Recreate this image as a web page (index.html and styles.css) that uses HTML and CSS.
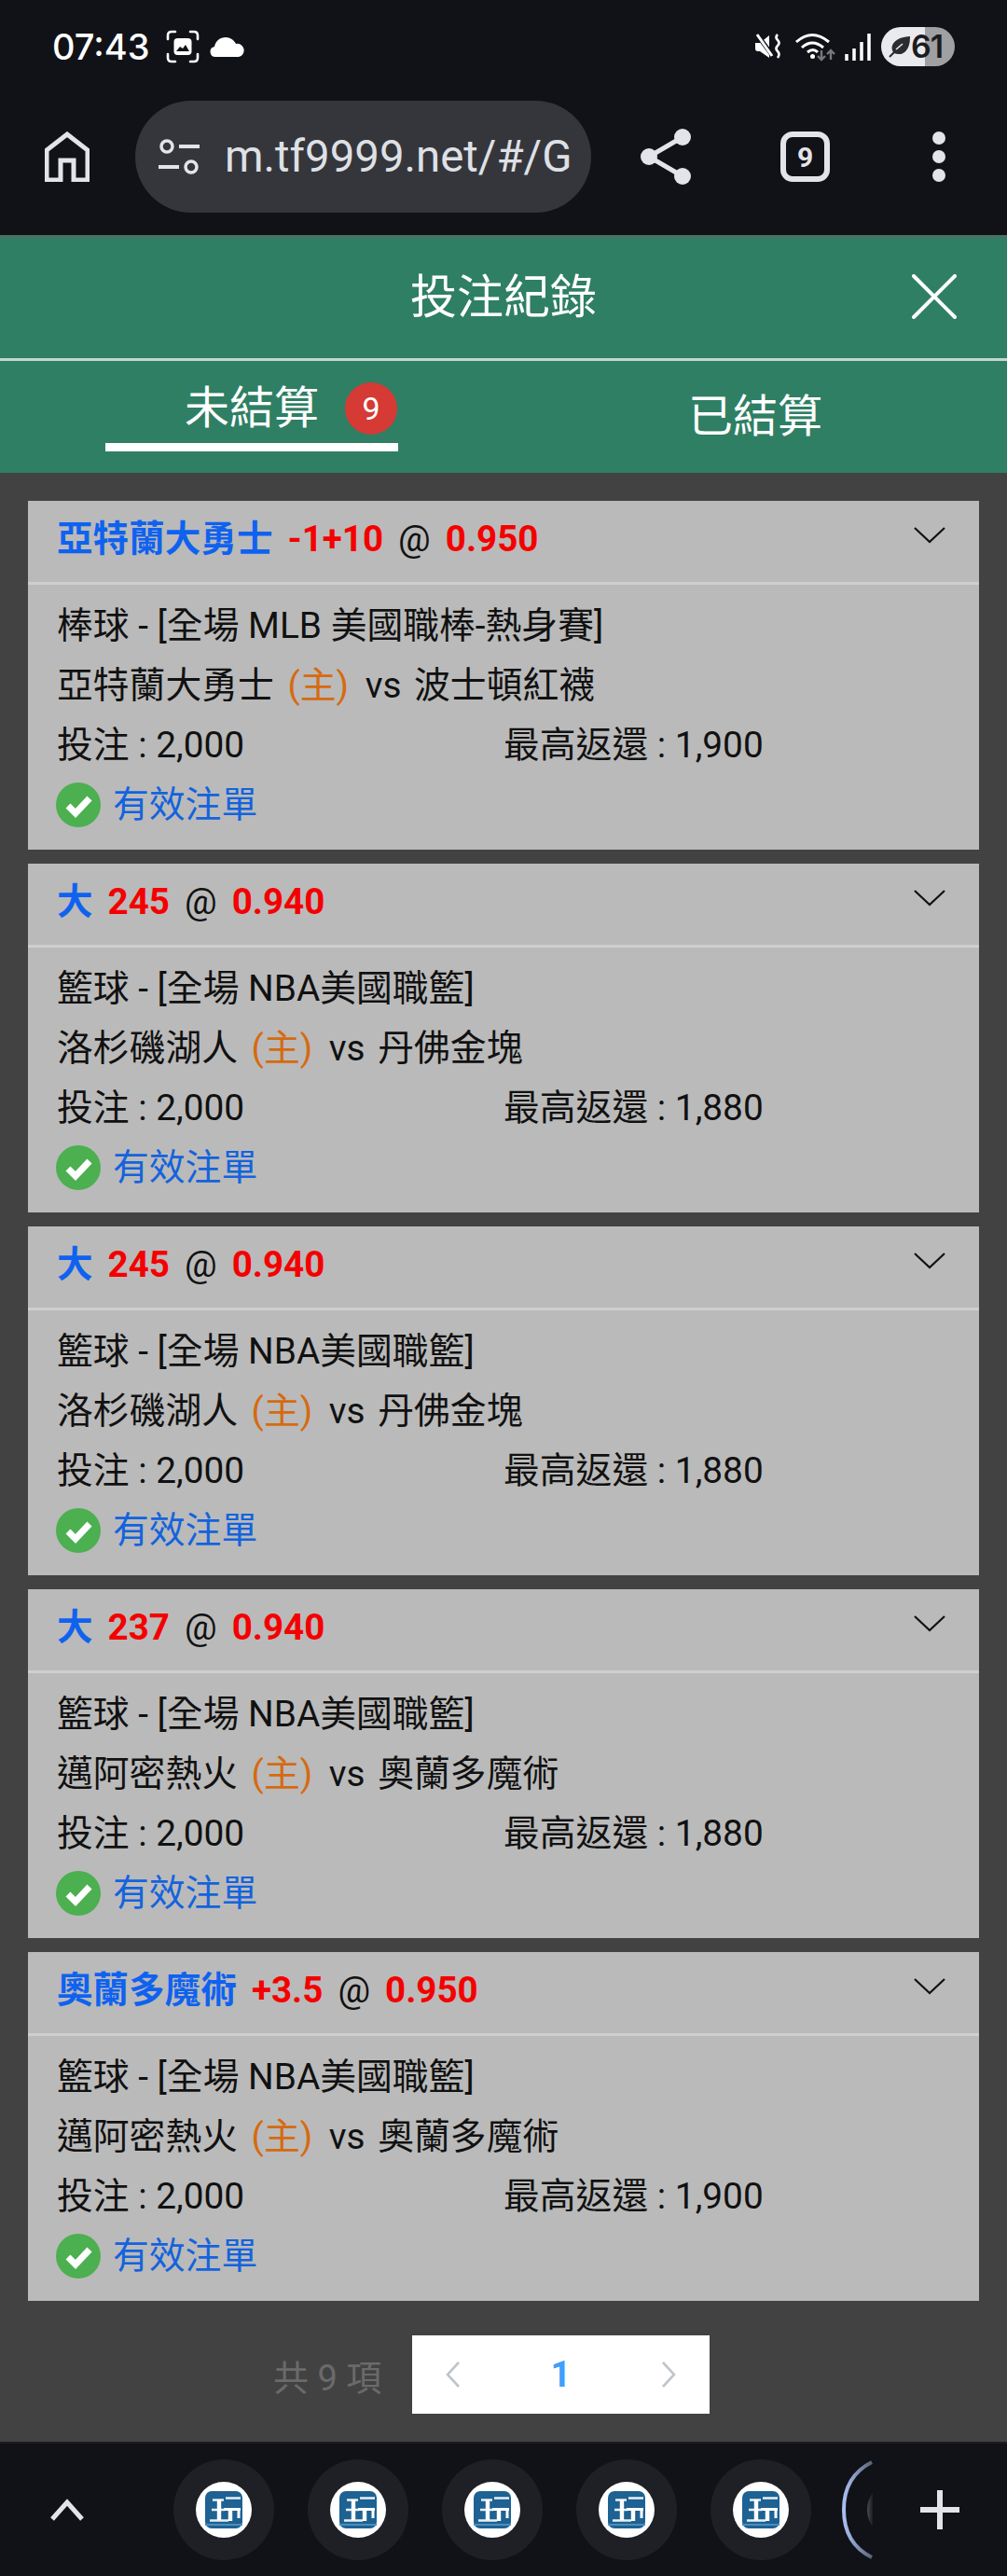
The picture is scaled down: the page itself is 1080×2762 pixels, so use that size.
FILE: index.html
```html
<!DOCTYPE html>
<html lang="zh-Hant">
<head>
<meta charset="utf-8">
<title>投注紀錄</title>
<link rel="stylesheet" href="styles.css">
</head>
<body>
<svg class="sprite" width="0" height="0" aria-hidden="true">
  <symbol id="check" viewBox="0 0 48 48">
    <circle cx="24" cy="24" r="24" fill="#4caf50"/>
    <path d="M13 25l8 8 15-16" fill="none" stroke="#fff" stroke-width="7"/>
  </symbol>
  <symbol id="chev" viewBox="0 0 34 18">
    <path d="M1 1l16 15L33 1" fill="none" stroke="#111" stroke-width="2.2"/>
  </symbol>
  <symbol id="logo" viewBox="0 0 60 60">
    <circle cx="30" cy="30" r="30" fill="#fff"/>
    <rect x="10" y="10" width="40" height="40" rx="7" fill="#1d6293"/>
    <path d="M10 46h40" stroke="#4f8db7" stroke-width="2"/>
    <path d="M18 19.500h12M17 30h14M15 41.500h20M32 17.500h16" fill="none" stroke="#e8f0f5" stroke-width="2.400"/>
    <path d="M30 29.500h18" stroke="#fff" stroke-width="3"/>
    <path d="M25 19v22M37 30v12" stroke="#fff" stroke-width="4.400"/>
    <path d="M46 30v9" stroke="#fff" stroke-width="3"/>
  </symbol>
</svg>

<header class="status">
  <div class="status-left">
    <span class="clock">07:43</span>
    <svg class="ic-capture" viewBox="0 0 36 36"><path d="M2 10V6q0-4 4-4h4M26 2h4q4 0 4 4v4M34 26v4q0 4-4 4h-4M10 34H6q-4 0-4-4v-4" fill="none" stroke="#fff" stroke-width="2.6" stroke-linecap="round"/><rect x="8.500" y="9" width="19" height="18" rx="4" fill="#fff"/><path d="M11 23l4-5 3 2 3-4 4 7z" fill="#111217"/></svg>
    <svg class="ic-cloud" viewBox="0 0 38 22"><path d="M6 22a5.500 5.500 0 0 1-1-10.900C6 5 11 1 17 1c5 0 9 3 11 7a7 7 0 0 1 3 14z" fill="#fff"/></svg>
  </div>
  <div class="status-right">
    <svg class="ic-mute" viewBox="0 0 29 30"><path d="M0 11h5L15 3v24l-10-7H3q-3 0-3-3z" fill="#fff"/><path d="M1 1l18 24" stroke="#111217" stroke-width="5"/><path d="M2 2l16 23" stroke="#fff" stroke-width="3"/><path d="M24 2q-3 3 0 6t0 6 0 6 0 7" fill="none" stroke="#fff" stroke-width="2.6"/></svg>
    <svg class="ic-wifi" viewBox="0 0 44 32"><path d="M1 11q17-15 35 0M7 17q11-10 23 0M13 22q6-5 11 0" fill="none" stroke="#fff" stroke-width="3"/><circle cx="18.500" cy="26.500" r="2.500" fill="#fff"/><path d="M28 20v10M24 26l4 4 4-4M38 30V20M34 24l4-4 4 4" fill="none" stroke="#77787b" stroke-width="2.400"/></svg>
    <svg class="ic-signal" viewBox="0 0 28 30"><path d="M2 23v7M10 17v13M18 10v20M26 1v29" stroke="#fff" stroke-width="3.500"/></svg>
    <div class="battery">
      <svg class="ic-leaf" viewBox="0 0 24 24"><path d="M2 23l6-6M7 18C2 10 10 3 23 2c0 12-6 20-16 16z" fill="#2b2c2f" stroke="#2b2c2f" stroke-width="2"/><path d="M9 15l7-6" stroke="#e9eaee" stroke-width="1.600"/></svg>
      <span class="battery-num">61</span>
    </div>
  </div>
</header>

<nav class="toolbar">
  <svg class="ic-home" viewBox="0 0 48 54"><path d="M2 52V20L24 3l22 17v32H31V31H17v21z" fill="none" stroke="#e3e4e9" stroke-width="5"/></svg>
  <div class="urlbar">
    <svg class="ic-tune" viewBox="0 0 44 38"><circle cx="9" cy="8" r="6" fill="none" stroke="#e3e4e9" stroke-width="3.500"/><path d="M22 8h22M0 30h22" stroke="#e3e4e9" stroke-width="4"/><circle cx="35" cy="30" r="6" fill="none" stroke="#e3e4e9" stroke-width="3.500"/></svg>
    <span class="url">m.tf9999.net/#/G</span>
  </div>
  <svg class="ic-share" viewBox="0 0 54 60"><path d="M45 9L9 30l36 21" fill="none" stroke="#e3e4e9" stroke-width="5"/><circle cx="45" cy="9" r="9" fill="#e3e4e9"/><circle cx="9" cy="30" r="9" fill="#e3e4e9"/><circle cx="45" cy="51" r="9" fill="#e3e4e9"/></svg>
  <div class="tabcount">9</div>
  <div class="kebab"><i></i><i></i><i></i></div>
</nav>

<section class="head">
  <div class="title-row">
    <h1 class="title">投注紀錄</h1>
    <svg class="ic-close" viewBox="0 0 48 48"><path d="M2 2l44 44M46 2L2 46" stroke="#fff" stroke-width="4" stroke-linecap="round"/></svg>
  </div>
  <div class="tabs">
    <div class="tab tab-active">
      <span class="tab-label">未結算</span>
      <span class="badge">9</span>
    </div>
    <div class="tab">
      <span class="tab-label">已結算</span>
    </div>
  </div>
</section>

<main class="list">
  <article class="card">
    <div class="card-head">
      <div class="pick"><b class="team">亞特蘭大勇士</b><b class="hcp">-1+10</b><span class="at">@</span><b class="odds">0.950</b></div>
      <svg class="chev"><use href="#chev"/></svg>
    </div>
    <div class="card-body">
      <p class="row">棒球 - [全場 MLB 美國職棒-熱身賽]</p>
      <p class="row">亞特蘭大勇士 <span class="home">(主)</span> <span class="vs">vs</span> 波士頓紅襪</p>
      <div class="row cols"><span class="col">投注 : 2,000</span><span>最高返還 : 1,900</span></div>
      <div class="row valid"><svg class="check"><use href="#check"/></svg><span>有效注單</span></div>
    </div>
  </article>
  <article class="card">
    <div class="card-head">
      <div class="pick"><b class="team">大</b><b class="hcp">245</b><span class="at">@</span><b class="odds">0.940</b></div>
      <svg class="chev"><use href="#chev"/></svg>
    </div>
    <div class="card-body">
      <p class="row">籃球 - [全場 NBA美國職籃]</p>
      <p class="row">洛杉磯湖人 <span class="home">(主)</span> <span class="vs">vs</span> 丹佛金塊</p>
      <div class="row cols"><span class="col">投注 : 2,000</span><span>最高返還 : 1,880</span></div>
      <div class="row valid"><svg class="check"><use href="#check"/></svg><span>有效注單</span></div>
    </div>
  </article>
  <article class="card">
    <div class="card-head">
      <div class="pick"><b class="team">大</b><b class="hcp">245</b><span class="at">@</span><b class="odds">0.940</b></div>
      <svg class="chev"><use href="#chev"/></svg>
    </div>
    <div class="card-body">
      <p class="row">籃球 - [全場 NBA美國職籃]</p>
      <p class="row">洛杉磯湖人 <span class="home">(主)</span> <span class="vs">vs</span> 丹佛金塊</p>
      <div class="row cols"><span class="col">投注 : 2,000</span><span>最高返還 : 1,880</span></div>
      <div class="row valid"><svg class="check"><use href="#check"/></svg><span>有效注單</span></div>
    </div>
  </article>
  <article class="card">
    <div class="card-head">
      <div class="pick"><b class="team">大</b><b class="hcp">237</b><span class="at">@</span><b class="odds">0.940</b></div>
      <svg class="chev"><use href="#chev"/></svg>
    </div>
    <div class="card-body">
      <p class="row">籃球 - [全場 NBA美國職籃]</p>
      <p class="row">邁阿密熱火 <span class="home">(主)</span> <span class="vs">vs</span> 奧蘭多魔術</p>
      <div class="row cols"><span class="col">投注 : 2,000</span><span>最高返還 : 1,880</span></div>
      <div class="row valid"><svg class="check"><use href="#check"/></svg><span>有效注單</span></div>
    </div>
  </article>
  <article class="card">
    <div class="card-head">
      <div class="pick"><b class="team">奧蘭多魔術</b><b class="hcp">+3.5</b><span class="at">@</span><b class="odds">0.950</b></div>
      <svg class="chev"><use href="#chev"/></svg>
    </div>
    <div class="card-body">
      <p class="row">籃球 - [全場 NBA美國職籃]</p>
      <p class="row">邁阿密熱火 <span class="home">(主)</span> <span class="vs">vs</span> 奧蘭多魔術</p>
      <div class="row cols"><span class="col">投注 : 2,000</span><span>最高返還 : 1,900</span></div>
      <div class="row valid"><svg class="check"><use href="#check"/></svg><span>有效注單</span></div>
    </div>
  </article>
  <div class="pager">
    <span class="total">共 9 項</span>
    <div class="pager-box">
      <svg class="pager-arrow" viewBox="0 0 16 28"><path d="M14 1L2 14l12 13" fill="none" stroke="#c0c4cc" stroke-width="2.600"/></svg>
      <span class="page">1</span>
      <svg class="pager-arrow" viewBox="0 0 16 28"><path d="M2 1l12 13L2 27" fill="none" stroke="#c0c4cc" stroke-width="2.600"/></svg>
    </div>
  </div>
</main>

<footer class="dock">
  <div class="dock-up"><svg class="ic-up" viewBox="0 0 36 24"><path d="M2 22L18 4l16 18" fill="none" stroke="#e3e4e9" stroke-width="5"/></svg></div>
  <div class="dock-tabs">
    <div class="bubble"><svg class="logo"><use href="#logo"/></svg></div>
    <div class="bubble"><svg class="logo"><use href="#logo"/></svg></div>
    <div class="bubble"><svg class="logo"><use href="#logo"/></svg></div>
    <div class="bubble"><svg class="logo"><use href="#logo"/></svg></div>
    <div class="bubble"><svg class="logo"><use href="#logo"/></svg></div>
  </div>
  <svg class="ring" viewBox="0 0 66 108">
    <defs>
      <linearGradient id="ringfade" x1="0" y1="0" x2="1" y2="0"><stop offset="0" stop-color="#a9bff0"/><stop offset="1" stop-color="#5a6478"/></linearGradient>
      <linearGradient id="innerfade" x1="0" y1="0" x2="1" y2="0"><stop offset="0" stop-color="#4a4b50"/><stop offset="1" stop-color="#1a1b20"/></linearGradient>
    </defs>
    <path d="M65 3Q35 18 35 54T65 105" fill="none" stroke="url(#ringfade)" stroke-width="4"/>
    <path d="M66 36Q60 44 60 54T66 72z" fill="url(#innerfade)"/>
  </svg>
  <div class="dock-plus"><svg class="ic-plus" viewBox="0 0 42 42"><path d="M21 0v42M0 21h42" stroke="#e3e4e9" stroke-width="6"/></svg></div>
</footer>
</body>
</html>
```

FILE: styles.css
```css
* { box-sizing: border-box; }
html, body { margin: 0; padding: 0; }
body {
  width: 1080px;
  height: 2762px;
  overflow: hidden;
  background: #424242;
  font-family: Roboto, "Noto Sans CJK TC", sans-serif;
  display: flex;
  flex-direction: column;
}
.sprite { position: absolute; }
p, h1 { margin: 0; font-weight: 400; }

/* status bar */
.status {
  height: 84px;
  padding: 16px 56px 0 56px;
  background: #111217;
  display: flex;
  align-items: center;
  justify-content: space-between;
  flex: none;
}
.status-left, .status-right { display: flex; align-items: center; }
.clock { font: 500 38px/1 Inter, Roboto, sans-serif; color: #fff; width: 122px; letter-spacing: 0; }
.ic-capture { width: 36px; height: 36px; margin-right: 11px; }
.ic-cloud { width: 38px; height: 22px; }
.ic-mute { width: 29px; height: 30px; margin-right: 14px; }
.ic-wifi { width: 44px; height: 32px; margin-right: 9px; }
.ic-signal { width: 28px; height: 30px; margin-right: 11px; }
.battery {
  width: 79px;
  height: 42px;
  border-radius: 21px;
  background: linear-gradient(90deg, #e9eaee 0 47px, #a0a0a2 47px);
  display: flex;
  align-items: center;
  padding-left: 7px;
}
.ic-leaf { width: 24px; height: 24px; flex: none; }
.battery-num { font: 600 34px/1 Inter, Roboto, sans-serif; color: #1b1c20; margin-left: 1px; letter-spacing: -1px; }

/* toolbar */
.toolbar {
  height: 168px;
  background: #111217;
  display: flex;
  align-items: center;
  flex: none;
  position: relative;
}
.ic-home { width: 48px; height: 54px; margin: 0 49px 0 48px; }
.urlbar {
  width: 489px;
  height: 120px;
  border-radius: 60px;
  background: #35363b;
  display: flex;
  align-items: center;
  padding-left: 25px;
  margin-right: 53px;
  overflow: hidden;
}
.ic-tune { width: 44px; height: 38px; margin-right: 27px; flex: none; }
.url { font-size: 47.4px; color: #dfe0e5; white-space: nowrap; }
.ic-share { width: 54px; height: 60px; margin-right: 96px; }
.tabcount {
  width: 53px;
  height: 54px;
  border: 6px solid #e3e4e9;
  border-radius: 13px;
  color: #e3e4e9;
  font-size: 30px;
  font-weight: 700;
  display: flex;
  align-items: center;
  justify-content: center;
  margin-right: 110px;
}
.kebab { display: flex; flex-direction: column; gap: 6px; }
.kebab i { display: block; width: 14px; height: 14px; border-radius: 50%; background: #e3e4e9; }

/* green head */
.head { flex: none; background: #2f7f64; border-top: 3px solid #4b6f63; }
.title-row {
  height: 132px;
  padding-bottom: 2px;
  border-bottom: 3px solid #c3d7d0;
  display: flex;
  align-items: center;
  justify-content: center;
  position: relative;
}
.title { font-size: 50px; line-height: 1; color: #fff; }
.ic-close { position: absolute; left: 978px; top: 39px; width: 48px; height: 48px; }
.tabs { height: 120px; display: flex; }
.tab { width: 540px; display: flex; align-items: center; justify-content: center; color: #fff; position: relative; }
.tab-label { font-size: 48px; line-height: 1; }
.tab-active { align-items: flex-start; padding-top: 27px; }
.tab-active::after {
  content: "";
  position: absolute;
  left: 113px;
  top: 88px;
  width: 314px;
  height: 9px;
  background: #fff;
}
.badge {
  position: absolute;
  left: 370px;
  top: 23px;
  width: 56px;
  height: 56px;
  border-radius: 50%;
  background: #d53a35;
  font-size: 34px;
  line-height: 56px;
  text-align: center;
  color: #fff;
}

/* list */
.list { flex: 1; padding: 30px 30px 0; min-height: 0; }
.card { height: 374px; background: #bababa; margin-bottom: 15px; }
.card-head {
  height: 90px;
  padding: 0 36px 0 31px;
  border-bottom: 3px solid #cfcfcf;
  display: flex;
  justify-content: space-between;
  align-items: flex-start;
}
.pick { font-size: 38.6px; line-height: 82px; height: 82px; white-space: nowrap; display: flex; gap: 16px; }
.team { color: #0f62ef; font-weight: 700; }
.hcp, .odds { color: #f40000; font-weight: 700; }
.at { color: #111; }
.chev { width: 34px; height: 18px; margin-top: 28px; }
.card-body { padding: 12px 0 0 31px; color: #111; font-size: 38.8px; }
.row { height: 64px; line-height: 64px; white-space: nowrap; }
.home { color: #d66a10; margin: 0 8px 0 5px; }
.vs { margin-right: 4px; }
.cols { display: flex; }
.col { width: 479px; }
.valid { display: flex; align-items: center; color: #1463dd; }
.check { width: 48px; height: 48px; margin: 0 13px 0 -1px; }

/* pager */
.pager { display: flex; align-items: center; padding: 22px 0 0 263px; gap: 30px; }
.total { font-size: 38px; color: #6a6a6a; width: 119px; white-space: nowrap; }
.pager-box {
  width: 319px;
  height: 84px;
  background: #fff;
  display: flex;
  align-items: center;
  justify-content: space-between;
  padding: 0 36px;
}
.pager-arrow { width: 16px; height: 28px; }
.page { font-size: 38px; font-weight: 700; color: #409eff; }

/* dock */
.dock {
  flex: none;
  height: 144px;
  background: #111217;
  border-top: 2px solid #1c1d21;
  display: flex;
  align-items: center;
}
.dock-up { width: 186px; padding-left: 54px; }
.ic-up { display: block; width: 36px; height: 24px; }
.dock-tabs { display: flex; gap: 36px; }
.bubble {
  width: 108px;
  height: 108px;
  border-radius: 50%;
  background: #1f2025;
  display: flex;
  align-items: center;
  justify-content: center;
}
.logo { width: 60px; height: 60px; }
.ring { width: 66px; height: 108px; flex: none; }
.dock-plus { flex: 1; display: flex; justify-content: center; }
.ic-plus { display: block; width: 42px; height: 42px; }
```
